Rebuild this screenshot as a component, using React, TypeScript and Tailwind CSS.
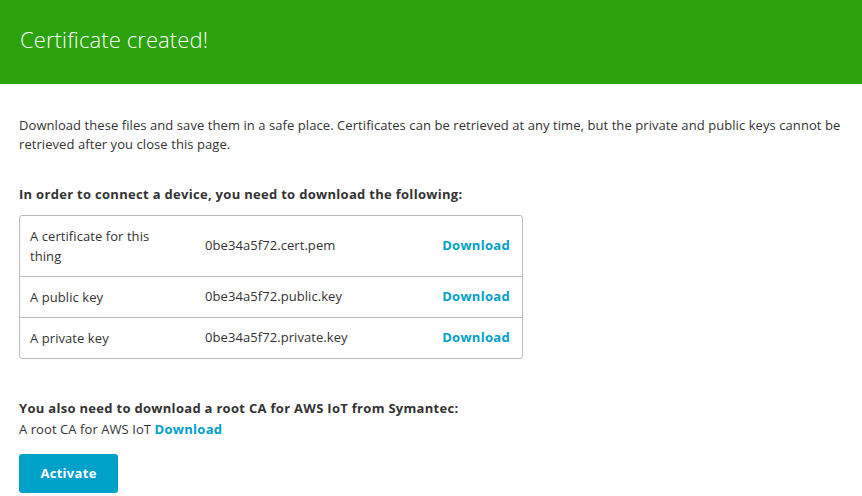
import React from "react";

const rows = [
  { label: "A certificate for this thing", file: "0be34a5f72.cert.pem", tall: true },
  { label: "A public key", file: "0be34a5f72.public.key" },
  { label: "A private key", file: "0be34a5f72.private.key" },
];

export default function App() {
  return (
    <div className="w-[862px] h-[496px] overflow-hidden bg-white text-[#333] tracking-[0.07px] [font-family:'Open_Sans',sans-serif]">
      <div className="h-[84px] bg-[#2ca20c] flex items-center px-[20px]">
        <h1 className="text-[22px] font-light text-white leading-none pb-[7px] tracking-[0.1px]">Certificate created!</h1>
      </div>
      <div className="px-[19px] pt-[32px]">
        <p className="text-[13px] leading-[19px]">
          Download these files and save them in a safe place. Certificates can be retrieved at any time, but the private and public keys cannot be retrieved after you close this page.
        </p>
        <h2 className="mt-[31px] text-[13px] font-bold leading-[19px] tracking-[0.3px]">In order to connect a device, you need to download the following:</h2>
        <div className="mt-[11px] w-[504px] border border-[#bbbbbb] rounded-[3px] text-[13px]">
          {rows.map((r, i) => (
            <div
              key={i}
              className={`flex items-center pl-[10px] pr-[12px] ${r.tall ? "h-[60px]" : "h-[41px] border-t border-[#bbbbbb]"}`}
            >
              <div className="w-[175px] leading-[20px] pr-[40px]">{r.label}</div>
              <div className="flex-1">{r.file}</div>
              <a className="font-bold text-[#00a1c9] tracking-[0.3px]">Download</a>
            </div>
          ))}
        </div>
        <h3 className="mt-[40px] text-[13px] font-bold leading-[19px] tracking-[0.3px]">You also need to download a root CA for AWS IoT from Symantec:</h3>
        <p className="text-[13px] leading-[19px] mt-[2px]">
          A root CA for AWS IoT <a className="font-bold text-[#00a1c9] tracking-[0.3px]">Download</a>
        </p>
        <button className="mt-[15px] w-[99px] h-[39px] rounded-[3px] bg-[#00a1c9] text-white text-[13px] font-bold tracking-[0.3px]">Activate</button>
      </div>
    </div>
  );
}
